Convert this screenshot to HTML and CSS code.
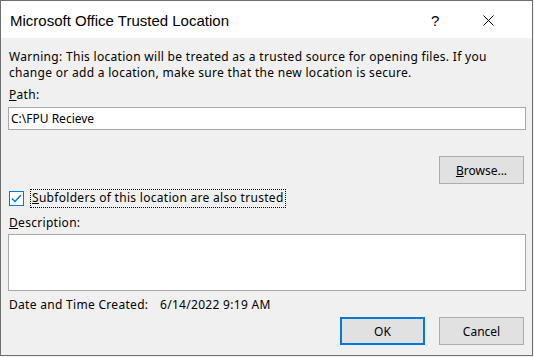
FILE: index.html
```html
<!DOCTYPE html>
<html lang="en">
<head>
  <meta charset="UTF-8">
  <title>Microsoft Office Trusted Location</title>
  <link rel="stylesheet" href="styles.css">
</head>
<body>

  <div class="window">
    <!-- Title bar -->
    <div class="titlebar">
      <span class="title">Microsoft Office Trusted Location</span>
      <span class="help">?</span>
      <span class="close">
        <svg width="11" height="11" viewBox="0 0 11 11">
          <path d="M0.5 0.5 L10.5 10.5 M10.5 0.5 L0.5 10.5" stroke="#000" stroke-width="1" fill="none"/>
        </svg>
      </span>
    </div>

    <div class="content">
      <p class="warning">Warning: This location will be treated as a trusted source for opening files. If you change or add a location, make sure that the new location is secure.</p>

      <label class="label path-label"><u>P</u>ath:</label>
      <div class="textbox">C:\FPU Recieve</div>

      <div class="row right browse-row">
        <button class="btn"><u>B</u>rowse...</button>
      </div>

      <div class="check-row">
        <span class="checkbox">
          <svg width="13" height="13" viewBox="0 0 13 13">
            <path d="M2 6.5 L5 9.5 L11 3" stroke="#0078d7" stroke-width="1.4" fill="none"/>
          </svg>
        </span>
        <span class="check-label"><u>S</u>ubfolders of this location are also trusted</span>
      </div>

      <label class="label desc-label"><u>D</u>escription:</label>
      <div class="textbox textarea"></div>

      <div class="date-row">
        <span class="date-name">Date and Time Created:</span>
        <span class="date-value">6/14/2022 9:19 AM</span>
      </div>

      <div class="row right buttons">
        <button class="btn default">OK</button>
        <button class="btn">Cancel</button>
      </div>
    </div>
  </div>

</body>
</html>
```

FILE: styles.css
```css
body {
  margin: 0;
  padding: 0;
  background-color: #f0f0f0;
  font-family: "Segoe UI", "Noto Sans", sans-serif;
  font-size: 12px;
  line-height: 16px;
  color: #000;
}

.window {
  width: 531px;
  height: 354px;
  border: 1px solid #6f6f6f;
  background-color: #f0f0f0;
  display: flex;
  flex-direction: column;
}

/* Title bar */
.titlebar {
  height: 37px;
  background-color: #fff;
  display: flex;
  align-items: center;
  font-family: "Segoe UI", "Liberation Sans", sans-serif;
}

.title {
  font-size: 15px;
  padding-left: 9px;
  flex: 1;
  padding-top: 2px;
}

.help {
  font-size: 15px;
  width: 12px;
  margin-right: 40px;
  padding-top: 2px;
}

.close {
  display: flex;
  margin-right: 38px;
  padding-top: 2px;
}

/* Content */
.content {
  padding: 11px 6px 0 7px;
  display: flex;
  flex-direction: column;
  letter-spacing: 0.3px;
}

.warning {
  margin: 0;
  padding-left: 1px;
  max-width: 490px;
}

.label {
  display: block;
  padding-left: 1px;
}

.path-label {
  margin-top: 6px;
}

.textbox {
  height: 21px;
  border: 1px solid #a8a8a8;
  background-color: #fff;
  margin-top: 4px;
  padding: 0 2px;
  display: flex;
  align-items: center;
  letter-spacing: 0;
}

.textarea {
  height: 55px;
  margin-top: 3px;
}

.row {
  display: flex;
}

.right {
  justify-content: flex-end;
  padding-right: 2px;
}

.browse-row {
  margin-top: 26px;
}

.btn {
  width: 85px;
  height: 28px;
  font-family: "Segoe UI", "Noto Sans", sans-serif;
  font-size: 12px;
  letter-spacing: 0;
  color: #000;
  background-color: #e1e1e1;
  border: 1px solid #adadad;
  padding: 0;
}

.btn.default {
  border: 2px solid #0078d7;
}

.buttons {
  margin-top: 4px;
  gap: 14px;
}

.check-row {
  margin-top: 5px;
  display: flex;
  align-items: center;
  padding-left: 1px;
}

.checkbox {
  width: 13px;
  height: 13px;
  border: 1px solid #0078d7;
  background-color: #fff;
  display: flex;
}

.check-label {
  margin-left: 6px;
  padding: 0 1px 1px;
  border: 1px dotted #000;
}

.desc-label {
  margin-top: 7px;
}

.date-row {
  margin-top: 6px;
  padding-left: 1px;
  display: flex;
}

.date-name {
  width: 151px;
}
```
